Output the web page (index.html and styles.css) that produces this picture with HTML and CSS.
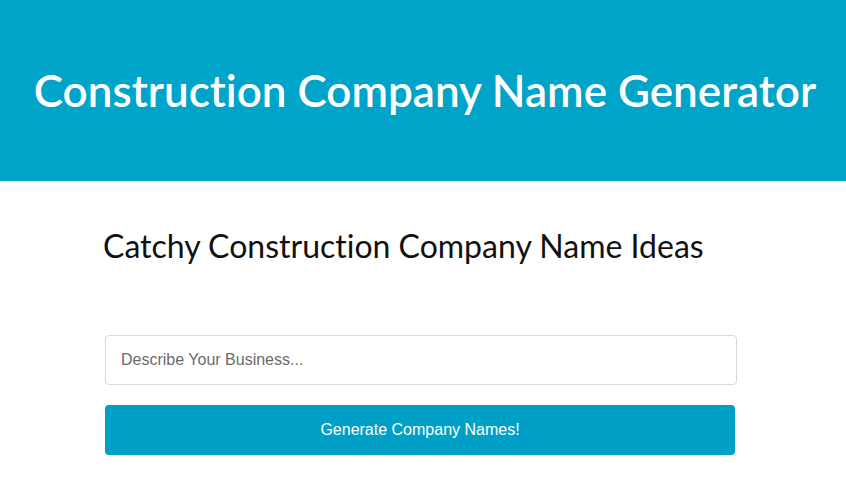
FILE: index.html
```html
<html lang="en">
<head>
    <meta charset="UTF-8">
    <meta name="viewport" content="width=device-width, initial-scale=1.0">
    <title>Construction Company Name Generator</title>
    <link rel="stylesheet" href="styles.css">
</head>
<body>
    <header class="banner">
        <h1 class="banner_title">Construction Company Name Generator</h1>
    </header>
    <main class="content">
        <h2 class="ideas_title">Catchy Construction Company Name Ideas</h2>
        <form class="gen_form" onsubmit="return false;">
            <input type="text" class="gen_input" placeholder="Describe Your Business...">
            <button type="submit" class="gen_btn">Generate Company Names!</button>
        </form>
    </main>
</body>
</html>
```

FILE: styles.css
```css
body {
    margin: 0;
    background: #fff;
    font-family: "Liberation Sans", Arial, sans-serif;
}
.banner {
    background: #00a4c8;
    height: 181px;
    display: flex;
    align-items: center;
    justify-content: center;
}
.banner_title {
    margin: 0 0 2px 4px;
    color: #fff;
    font-family: Lato, "Noto Sans", sans-serif;
    font-variant-ligatures: none;
    font-weight: 600;
    font-size: 44px;
}
.content {
    width: 636px;
    margin: 0 auto;
}
.ideas_title {
    margin: 45px 0 0 -2px;
    font-family: Lato, "Noto Sans", sans-serif;
    font-variant-ligatures: none;
    font-weight: 400;
    font-size: 32px;
    color: #111;
}
.gen_form {
    margin-top: 70px;
    display: flex;
    flex-direction: column;
    align-items: flex-start;
    gap: 20px;
}
.gen_input {
    width: 632px;
    height: 50px;
    box-sizing: border-box;
    border: 1px solid #d9d9d9;
    border-radius: 4px;
    padding: 0 15px;
    font-family: "Liberation Sans", Arial, sans-serif;
    font-size: 16px;
    color: #333;
}
.gen_input::placeholder {
    color: #6b6b6b;
}
.gen_btn {
    height: 50px;
    width: 630px;
    border: none;
    border-radius: 4px;
    background: #00a0c6;
    color: #fff;
    font-family: "Liberation Sans", Arial, sans-serif;
    font-size: 16px;
    cursor: pointer;
}
```
